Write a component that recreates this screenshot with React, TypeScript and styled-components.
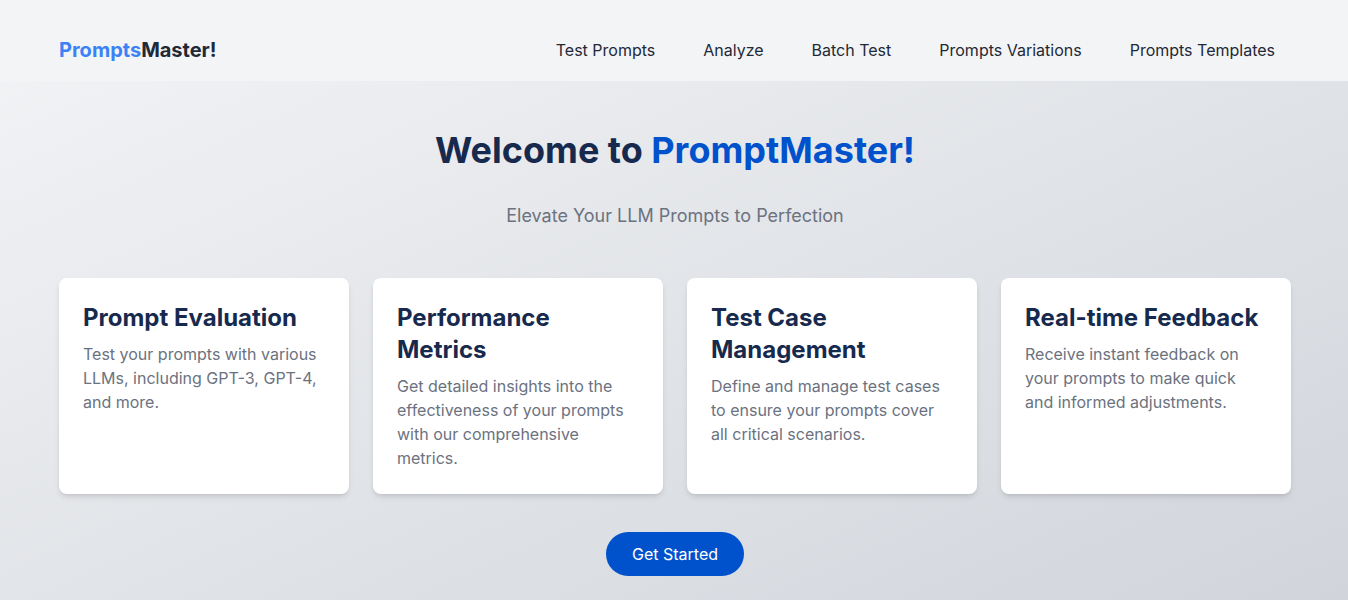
import React from "react";
import styled, { createGlobalStyle } from "styled-components";

const GlobalStyle = createGlobalStyle`
  html, body { margin: 0; padding: 0; }
  body { font-family: Inter, "Noto Sans", sans-serif; -webkit-font-smoothing: antialiased; }
  * { box-sizing: border-box; }
`;

const Page = styled.div`
  min-height: 100vh;
  background: linear-gradient(to bottom right, #f3f4f6, #d1d5db);
`;

const Header = styled.header`
  background: #f3f4f6;
  height: 81px;
`;

const HeaderInner = styled.div`
  max-width: 1280px;
  margin: 0 auto;
  padding: 36px 23px 17px 25px;
  display: flex;
  align-items: center;
  justify-content: space-between;
`;

const Logo = styled.div`
  font-size: 20px;
  line-height: 28px;
  font-weight: 700;
  color: #1f2937;
`;

const LogoAccent = styled.span`
  color: #3b82f6;
`;

const Nav = styled.nav`
  display: flex;
  gap: 16px;
`;

const NavLink = styled.a`
  padding: 0 16px;
  font-size: 16px;
  line-height: 28px;
  color: #1f2937;
  text-decoration: none;
  cursor: pointer;
`;

const Main = styled.main`
  max-width: 1280px;
  margin: 0 auto;
  padding: 49px 23px 24px 25px;
  display: flex;
  flex-direction: column;
  align-items: center;
`;

const Title = styled.h1`
  margin: 0 0 32px;
  font-size: 36px;
  line-height: 40px;
  font-weight: 700;
  color: #172a4e;
  text-align: center;
`;

const TitleAccent = styled.span`
  color: #0052cc;
`;

const Subtitle = styled.p`
  margin: 0 0 48px;
  font-size: 18px;
  line-height: 28px;
  color: #6b7280;
`;

const Grid = styled.div`
  width: 100%;
  display: grid;
  grid-template-columns: repeat(4, 1fr);
  gap: 24px;
`;

const Card = styled.div`
  background: #ffffff;
  border-radius: 8px;
  padding: 24px;
  box-shadow: 0 4px 6px -1px rgba(0, 0, 0, 0.1), 0 2px 4px -2px rgba(0, 0, 0, 0.1);
`;

const CardTitle = styled.h2`
  margin: 0 0 8px;
  font-size: 24px;
  line-height: 32px;
  font-weight: 700;
  color: #172a4e;
`;

const CardText = styled.p`
  margin: 0;
  font-size: 16px;
  line-height: 24px;
  color: #6b7280;
  padding-right: 8px;
`;

const Button = styled.button`
  margin-top: 38px;
  height: 44px;
  padding: 0 25.5px;
  border: none;
  border-radius: 9999px;
  background: #0052cc;
  color: #ffffff;
  font-family: Inter, "Noto Sans", sans-serif;
  font-size: 16px;
  cursor: pointer;
`;

const features = [
  {
    title: "Prompt Evaluation",
    text: "Test your prompts with various LLMs, including GPT-3, GPT-4, and more.",
  },
  {
    title: "Performance Metrics",
    text: "Get detailed insights into the effectiveness of your prompts with our comprehensive metrics.",
  },
  {
    title: "Test Case Management",
    text: "Define and manage test cases to ensure your prompts cover all critical scenarios.",
  },
  {
    title: "Real-time Feedback",
    text: "Receive instant feedback on your prompts to make quick and informed adjustments.",
  },
];

const navItems = ["Test Prompts", "Analyze", "Batch Test", "Prompts Variations", "Prompts Templates"];

export default function App() {
  return (
    <>
      <GlobalStyle />
      <Page>
        <Header>
          <HeaderInner>
            <Logo>
              <LogoAccent>Prompts</LogoAccent>Master!
            </Logo>
            <Nav>
              {navItems.map((n) => (
                <NavLink key={n}>{n}</NavLink>
              ))}
            </Nav>
          </HeaderInner>
        </Header>
        <Main>
          <Title>
            Welcome to <TitleAccent>PromptMaster!</TitleAccent>
          </Title>
          <Subtitle>Elevate Your LLM Prompts to Perfection</Subtitle>
          <Grid>
            {features.map((f) => (
              <Card key={f.title}>
                <CardTitle>{f.title}</CardTitle>
                <CardText>{f.text}</CardText>
              </Card>
            ))}
          </Grid>
          <Button>Get Started</Button>
        </Main>
      </Page>
    </>
  );
}
